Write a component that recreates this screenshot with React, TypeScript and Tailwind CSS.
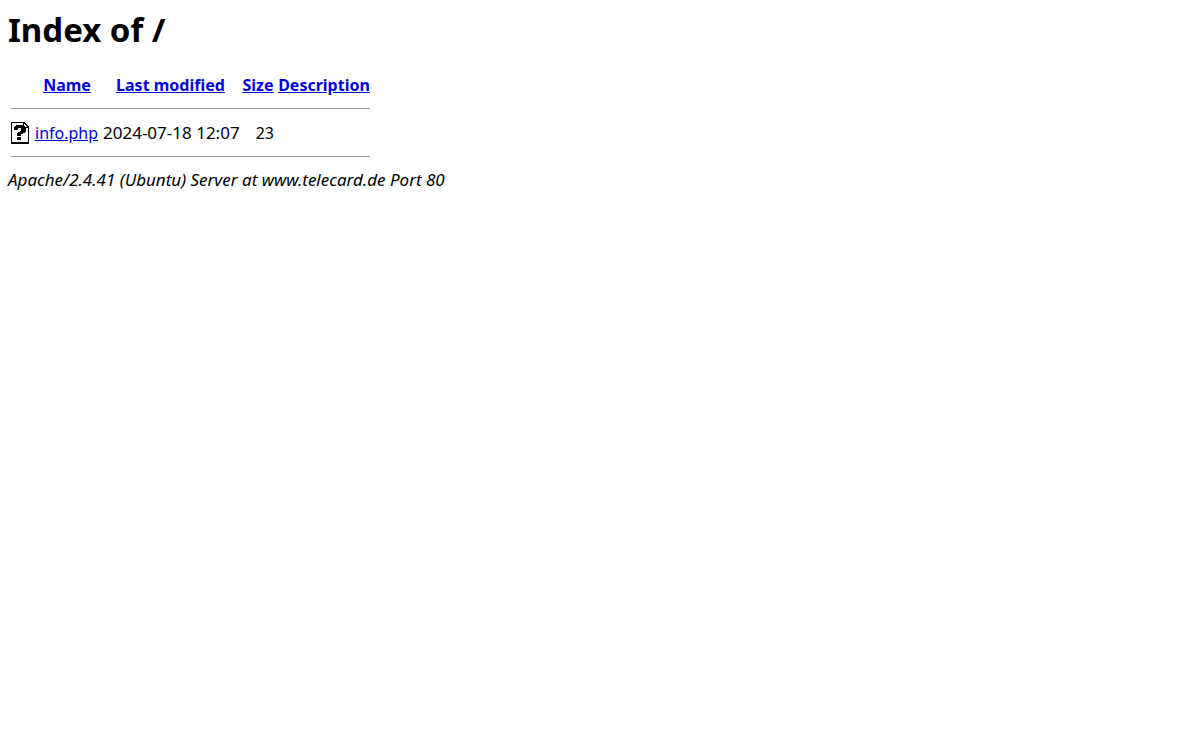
import React from 'react';

const columns = ['Name', 'Last modified', 'Size', 'Description'];

const files = [{ name: 'info.php', modified: '2024-07-18 12:07', size: '23' }];

// Unknown file type: dog-eared page with a question mark
const UnknownIcon: React.FC = () => (
  <svg viewBox="0 0 20 22" className="block h-[22px] w-5" role="img" aria-label="[   ]" shapeRendering="crispEdges">
    <path d="M0 0h13l5 5v17H0z" fill="#000" />
    <path d="M1 1h11v5h5v14H1z" fill="#fff" />
    <path d="M13 2v3h3z" fill="#fff" />
    <path d="M5 3h7v1h2v1h1v5h-1v1h-2v1h-2v2H6v-3h1v-1h2V9h1V6H7v2H3V5h1V4h1zM6 15h4v3H6z" fill="#000" />
  </svg>
);

const Rule: React.FC = () => (
  <tr>
    <td colSpan={5} className="p-px">
      <hr className="mb-[9px] mt-2 h-px border-0 bg-[#999999]" />
    </td>
  </tr>
);

const App: React.FC = () => {
  return (
    <main className="bg-white px-2 py-2 font-['Noto_Sans','Open_Sans',sans-serif] text-base leading-[22px] text-black">
      <h1 className="mb-5 text-[33px] font-bold leading-[44px]">Index of /</h1>

      <table className="w-[365px] table-fixed border-separate border-spacing-[2px]">
        <colgroup>
          <col className="w-[22px]" />
          <col className="w-[66px]" />
          <col className="w-[137px]" />
          <col className="w-[34px]" />
          <col className="w-[94px]" />
        </colgroup>
        <tbody>
          <tr className="leading-[21px]">
            <td className="p-px"></td>
            {columns.map((column) => (
              <th key={column} scope="col" className="whitespace-nowrap p-px text-center font-bold">
                <a href="#" className="text-[#0000dd] underline">{column}</a>
              </th>
            ))}
          </tr>
          <Rule />
          {files.map((file) => (
            <tr key={file.name}>
              <td className="p-px"><UnknownIcon /></td>
              <td className="whitespace-nowrap p-px">
                <a href="#" className="text-[#0000dd] underline">{file.name}</a>
              </td>
              <td className="whitespace-nowrap p-px text-[17px]">{file.modified}</td>
              <td className="p-px text-right">{file.size}</td>
              <td className="p-px"></td>
            </tr>
          ))}
          <Rule />
        </tbody>
      </table>

      <address className="text-[17px] italic">Apache/2.4.41 (Ubuntu) Server at www.telecard.de Port 80</address>
    </main>
  );
};

export default App;
